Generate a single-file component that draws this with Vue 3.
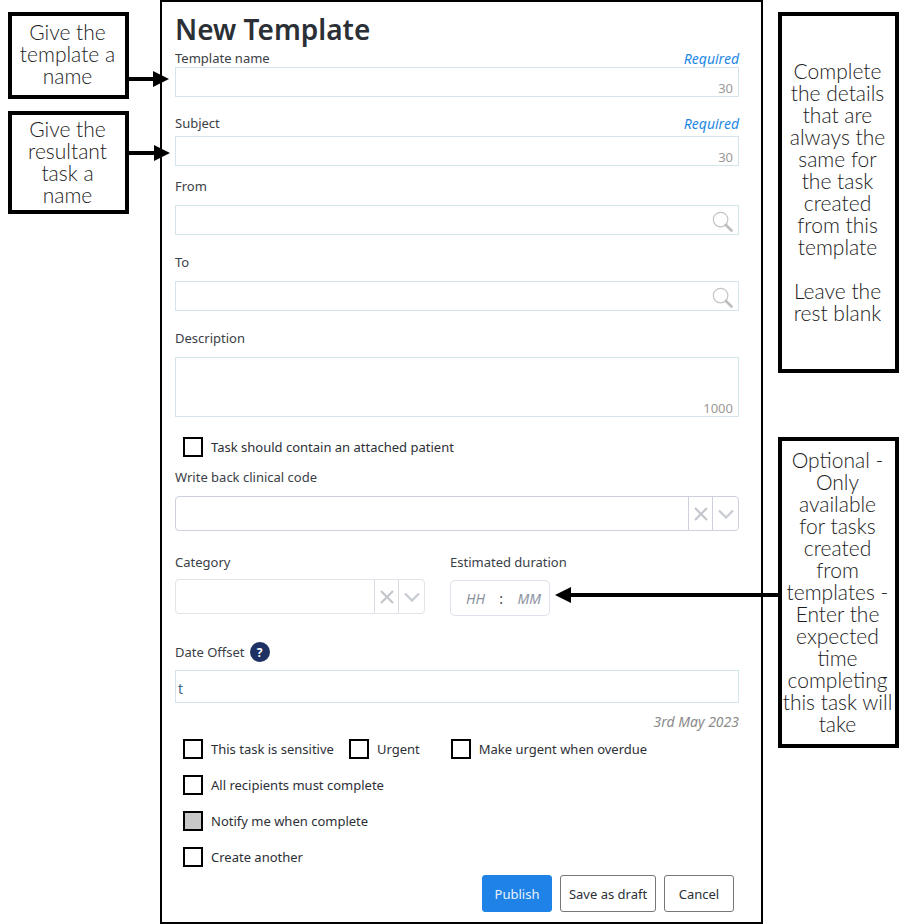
<template>
  <div class="page">
    <div class="notes notes-left">
      <div class="note note-name">Give the<br>template a<br>name</div>
      <div class="note note-task">Give the<br>resultant<br>task a<br>name</div>
    </div>

    <form class="panel" @submit.prevent>
      <h1 class="title">New Template</h1>

      <div class="field field-name">
        <div class="label-row">
          <label>Template name</label>
          <span class="required">Required</span>
        </div>
        <div class="input input-blue short"><span class="count">30</span></div>
      </div>

      <div class="field field-subject">
        <div class="label-row">
          <label>Subject</label>
          <span class="required">Required</span>
        </div>
        <div class="input input-blue short"><span class="count">30</span></div>
      </div>

      <div v-for="name in ['From', 'To']" :key="name" class="field field-search">
        <div class="label-row"><label>{{ name }}</label></div>
        <div class="input input-blue short">
          <svg class="search" width="21" height="21" viewBox="0 0 22 22">
            <circle cx="9" cy="9" r="7.6" fill="none" stroke="#c4c4c4" stroke-width="1.2" />
            <path d="M14.6 14.6 L20.4 20.4" stroke="#bdbdbd" stroke-width="2.8" stroke-linecap="round" />
          </svg>
        </div>
      </div>

      <div class="field field-desc">
        <div class="label-row"><label>Description</label></div>
        <div class="input input-blue area"><span class="count">1000</span></div>
      </div>

      <div class="check-row attached">
        <span class="box"></span><span>Task should contain an attached patient</span>
      </div>

      <div class="field field-code">
        <div class="label-row"><label>Write back clinical code</label></div>
        <div class="select">
          <div class="select-value"></div>
          <div class="select-btn">
            <svg width="14" height="14" viewBox="0 0 14 14"><path d="M1 1 L13 13 M13 1 L1 13" stroke="#c3c7cd" stroke-width="2.2" /></svg>
          </div>
          <div class="select-btn">
            <svg width="16" height="10" viewBox="0 0 16 10"><path d="M1 1.5 L8 8.5 L15 1.5" fill="none" stroke="#c9cdd3" stroke-width="2.4" /></svg>
          </div>
        </div>
      </div>

      <div class="split">
        <div class="category">
          <div class="label-row"><label>Category</label></div>
          <div class="select">
            <div class="select-value"></div>
            <div class="select-btn">
              <svg width="14" height="14" viewBox="0 0 14 14"><path d="M1 1 L13 13 M13 1 L1 13" stroke="#c3c7cd" stroke-width="2.2" /></svg>
            </div>
            <div class="select-btn">
              <svg width="16" height="10" viewBox="0 0 16 10"><path d="M1 1.5 L8 8.5 L15 1.5" fill="none" stroke="#c9cdd3" stroke-width="2.4" /></svg>
            </div>
          </div>
        </div>
        <div class="duration">
          <div class="label-row"><label>Estimated duration</label></div>
          <div class="time">
            <span>HH</span><b>:</b><span>MM</span>
          </div>
        </div>
      </div>

      <div class="field field-offset">
        <div class="label-row offset-label">
          <label>Date Offset</label><span class="help">?</span>
        </div>
        <div class="input input-blue offset">t</div>
        <div class="date">3rd May 2023</div>
      </div>

      <div class="checks">
        <div class="check-row first">
          <span class="box"></span><span class="t1">This task is sensitive</span>
          <span class="box"></span><span class="t2">Urgent</span>
          <span class="box"></span><span>Make urgent when overdue</span>
        </div>
        <div class="check-row"><span class="box"></span><span>All recipients must complete</span></div>
        <div class="check-row"><span class="box grey"></span><span>Notify me when complete</span></div>
        <div class="check-row"><span class="box"></span><span>Create another</span></div>
      </div>

      <div class="actions">
        <button class="btn primary">Publish</button>
        <button class="btn draft">Save as draft</button>
        <button class="btn cancel">Cancel</button>
      </div>
    </form>

    <div class="notes notes-right">
      <div class="note note-details">
        Complete<br>the details<br>that are<br>always the<br>same for<br>the task<br>created<br>from this<br>template<br><br>Leave the<br>rest blank
      </div>
      <div class="note note-optional">
        Optional -<br>Only<br>available<br>for tasks<br>created<br>from<br>templates -<br>Enter the<br>expected<br>time<br>completing<br>this task will<br>take
      </div>
    </div>

    <!-- callout arrows sit over the panel edge -->
    <svg class="arrows" width="912" height="924" viewBox="0 0 912 924">
      <path d="M129 79 H155" stroke="#000" stroke-width="4" />
      <path d="M153 71 L169 79 L153 87 Z" fill="#000" />
      <path d="M129 153 H155" stroke="#000" stroke-width="4" />
      <path d="M154 145 L170 153 L154 161 Z" fill="#000" />
      <path d="M780 595 H568" stroke="#000" stroke-width="4" />
      <path d="M571 587 L555 595 L571 603 Z" fill="#000" />
    </svg>
  </div>
</template>

<script setup>
</script>

<style>
html, body {
  margin: 0;
  background: #fff;
}
</style>

<style scoped>
.page {
  position: relative;
  display: flex;
  width: 912px;
  height: 924px;
  overflow: hidden;
  font-family: "Noto Sans", "Open Sans", sans-serif;
  font-size: 13px;
  color: #3a4047;
  background: #fff;
}

.notes {
  display: flex;
  flex-direction: column;
  box-sizing: border-box;
}

.notes-left {
  width: 160px;
  padding: 12px 0 0 8px;
}

.notes-right {
  width: 149px;
  padding: 12px 0 0 15px;
}

.note {
  box-sizing: border-box;
  width: 121px;
  padding-right: 2px;
  border: 4px solid #000;
  background: #fff;
  color: #1c1c1c;
  font-family: Lato, sans-serif;
  font-size: 21px;
  font-weight: 300;
  line-height: 22px;
  white-space: nowrap;
  text-align: center;
}

.note-name {
  height: 87px;
  padding-top: 5px;
}

.note-task {
  height: 103px;
  margin-top: 12px;
  padding-top: 3px;
}

.note-details {
  height: 361px;
  padding-top: 44px;
}

.note-optional {
  height: 311px;
  margin-top: 64px;
  padding-top: 8px;
}

.panel {
  box-sizing: border-box;
  width: 603px;
  height: 924px;
  padding: 0 22px 0 13px;
  border: 2px solid #000;
}

.title {
  margin: 0;
  height: 48px;
  padding-top: 8px;
  box-sizing: border-box;
  font-size: 28px;
  line-height: 38px;
  font-weight: 600;
  color: #2b2f36;
}

.label-row {
  display: flex;
  justify-content: space-between;
  align-items: center;
  height: 17px;
  line-height: 17px;
}

.required {
  font-size: 14px;
  font-style: italic;
  color: #1e88e5;
}

.field-subject {
  margin-top: 17px;
}

.field-subject .label-row {
  height: 18px;
  padding-bottom: 4px;
}

.field-search {
  margin-top: 12px;
}

.field-search .label-row,
.field-desc .label-row,
.field-code .label-row {
  height: 16px;
  padding-bottom: 11px;
}

.field-search + .field-search,
.field-desc {
  margin-top: 19px;
}

.input {
  position: relative;
  box-sizing: border-box;
  background: #fff;
}

.input-blue {
  border: 1px solid #d3e4ec;
}

.short {
  height: 30px;
}

.area {
  height: 60px;
}

.count {
  position: absolute;
  right: 5px;
  bottom: -1px;
  font-size: 13px;
  color: #9a9a9a;
}

.search {
  position: absolute;
  right: 5px;
  top: 5px;
}

.check-row {
  display: flex;
  align-items: center;
  height: 20px;
  padding-left: 8px;
  color: #2c3036;
}

.box {
  box-sizing: border-box;
  flex: none;
  width: 20px;
  height: 20px;
  margin-right: 8px;
  border: 2px solid #000;
  background: #fff;
}

.box.grey {
  background: #c8c8c8;
}

.attached {
  margin-top: 20px;
}

.field-code {
  margin-top: 12px;
}

.select {
  display: flex;
  box-sizing: border-box;
  height: 35px;
  border: 1px solid #ccd1dc;
  border-radius: 4px;
  background: #fff;
}

.select-value {
  flex: 1;
}

.select-btn {
  display: flex;
  align-items: center;
  justify-content: center;
  box-sizing: border-box;
  width: 24px;
  border-left: 1px solid #ccd1dc;
}

.select-btn:last-child {
  width: 26px;
}

.split {
  display: flex;
  margin-top: 22px;
}

.category {
  width: 250px;
}

.category .label-row {
  height: 18px;
  padding-bottom: 8px;
}

.category .select {
  border-color: #e2e4ea;
}

.category .select-btn {
  border-left-color: #d8dbe2;
}

.duration {
  margin-left: 25px;
}

.duration .label-row {
  height: 18px;
  padding-bottom: 9px;
}

.time {
  display: flex;
  align-items: center;
  justify-content: space-between;
  box-sizing: border-box;
  width: 100px;
  height: 36px;
  padding: 0 8px 0 15px;
  border: 1px solid #dfe2ec;
  border-radius: 5px;
  font-size: 14px;
  font-style: italic;
  color: #8b93a1;
}

.time b {
  font-style: normal;
  font-weight: 400;
  color: #3a4047;
}

.field-offset {
  margin-top: 26px;
}

.offset-label {
  justify-content: flex-start;
  gap: 5px;
  height: 20px;
  margin-bottom: 8px;
}

.help {
  display: flex;
  align-items: center;
  justify-content: center;
  width: 20px;
  height: 20px;
  border-radius: 50%;
  background: #1d3263;
  color: #fff;
  font-size: 12px;
  font-weight: 700;
}

.offset {
  height: 33px;
  padding: 0 0 0 2px;
  font-size: 14px;
  line-height: 36px;
  color: #3c6a8a;
}

.date {
  height: 38px;
  padding-top: 10px;
  box-sizing: border-box;
  font-size: 14px;
  line-height: 17px;
  text-align: right;
  font-style: italic;
  color: #8a8a8a;
}

.checks {
  display: flex;
  flex-direction: column;
  gap: 16px;
  margin-top: -2px;
}

.t1 {
  margin-right: 15px;
}

.t2 {
  margin-right: 31px;
}

.actions {
  display: flex;
  gap: 8px;
  justify-content: flex-end;
  margin-top: 8px;
  padding-right: 5px;
}

.btn {
  box-sizing: border-box;
  height: 37px;
  padding: 0;
  border: 1px solid #777;
  border-radius: 3px;
  background: #fff;
  color: #2c3036;
  font-family: inherit;
  font-size: 13px;
}

.draft {
  width: 96px;
}

.cancel {
  width: 70px;
}

.primary {
  width: 70px;
  border-color: #1e82e6;
  background: #1e82e6;
  color: #e8f2fc;
}

.arrows {
  position: absolute;
  left: 0;
  top: 0;
  pointer-events: none;
}
</style>
